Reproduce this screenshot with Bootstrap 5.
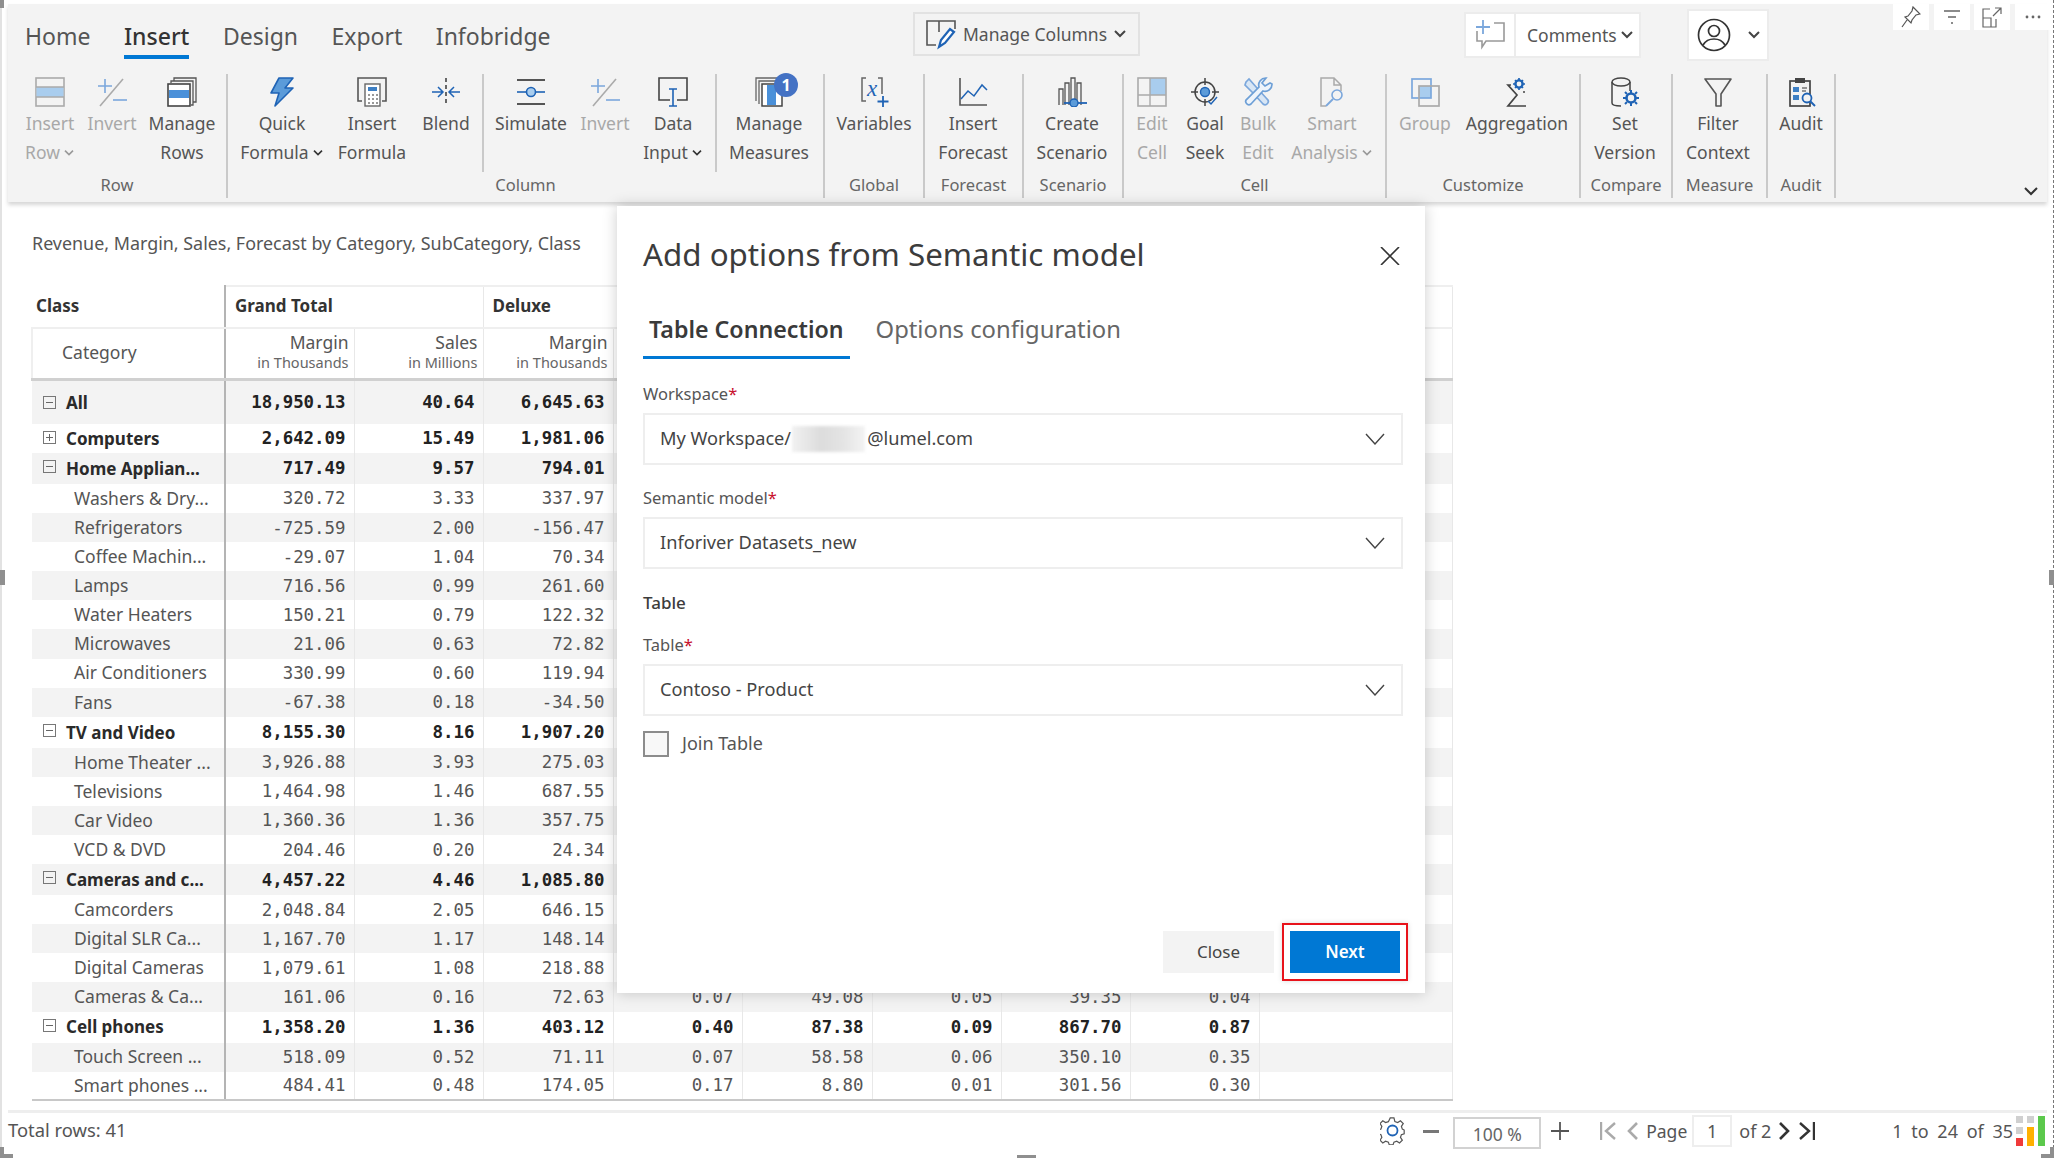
<!DOCTYPE html>
<html lang="en">
<head>
<meta charset="utf-8">
<title>Add options from Semantic model</title>
<link href="https://cdn.jsdelivr.net/npm/bootstrap@5.3.0/dist/css/bootstrap.min.css" rel="stylesheet">
<style>
html,body{height:1158px;overflow:hidden;background:#fff}
body{font-family:"Noto Sans",sans-serif;color:#444;font-size:17px;position:relative}
.shell{height:1158px;border-left:2px solid #e2e2e2;border-right:1px dashed #777}
/* ribbon */
.ribbonbar{margin:4px 6px 0 6px;height:198px;background:#f3f3f3;box-shadow:0 3px 4px rgba(0,0,0,.16);position:relative}
.ribbontop{height:70px}
.tabset{padding-left:17px;gap:33.5px;flex-wrap:nowrap;width:544px;flex:none}
.tabset .nav-link{padding:17px 0 4px;font-size:23px;line-height:30px;color:#555;border-bottom:4px solid transparent}
.tabset .nav-link.active{color:#333;font-weight:500;border-bottom-color:#0078d4}
.mcols{margin:8px 0 0 361px;width:227px;height:44px;border:2px solid #e2e2e2;background:#f3f3f3;color:#555;font-size:17.5px;padding:0 0 0 10px;gap:6px;border-radius:0;flex:none}
.cmts{margin:8px 0 0 324px;width:177px;height:46px;background:#fff;border:2px solid #ececec;flex:none}
.cmts .cicon{width:50px;border-right:2px solid #ececec}
.cmts .ctext{font-size:17.5px;color:#555;padding-left:11px;gap:3px}
.usr{margin:5px 0 0 46px;width:82px;height:52px;background:#fff;border:2px solid #ececec;flex:none}
.rgroup{border-right:2px solid #c9c9c9;height:124px;flex:none}
.rsegs{height:98px}
.rseg{height:98px;flex:none}
.rseg.sepd{border-right:2px solid #c9c9c9}
.glabel{font-size:16.5px;line-height:26px;color:#666;text-align:center;margin-top:0}
.btn.rbtn{padding:3px 0 0;border:0;border-radius:0;font-size:17.5px;line-height:29px;color:#555;background:transparent;flex:none;white-space:nowrap;display:flex;flex-direction:column;align-items:center;position:relative}
.btn.rbtn svg.ic{width:30px;height:30px;margin-bottom:2px;flex:none}
.btn.rbtn.off,.btn.rbtn.off:disabled{color:#a8a8a8;opacity:1}
.rbtn .line2{display:inline-flex;align-items:center;gap:3px}
.rcount{position:absolute;top:-1px;left:53px;width:24px;height:24px;border-radius:50%;background:#4472c4;color:#fff;font-size:16px;font-weight:700;line-height:24px;text-align:center}
.g1{width:220px}.g1 .rsegs{padding-left:12px}
.g2{width:597px}
.g3{width:100px}.g3 .rsegs{padding-left:6px}
.g4{width:99px}.g4 .rsegs{padding-left:6px}
.g5{width:100px}.g5 .rsegs{padding-left:4px}
.g6{width:263px}.g6 .rsegs{padding-left:6px}
.g7{width:194px}.g7 .rsegs{padding-left:6px}
.g8{width:92px}.g8 .rsegs{padding-left:4px}
.g9{width:95px}.g9 .rsegs{padding-left:6px}
.g10{width:68px}.g10 .rsegs{padding-left:5px}
.s2a{width:256px;padding-left:10px}.s2b{width:233px;padding-left:4px}.s2c{width:108px;padding-left:4px}
.bw44{width:44px}.bw56{width:56px}.bw60{width:60px}.bw62{width:62px}.bw64{width:64px}.bw74{width:74px}.bw76{width:76px}.bw78{width:78px}.bw80{width:80px}.bw84{width:84px}.bw86{width:86px}.bw88{width:88px}.bw92{width:92px}.bw96{width:96px}.bw104{width:104px}.bw120{width:120px}
.pinbar{position:absolute;top:0;left:1885px;gap:4.6px}
.pinbar .pcell{width:36px;height:26px;background:#fff;display:flex;align-items:center;justify-content:center}
.ribbonmore{position:absolute;left:2016px;top:182px;line-height:0}
/* content */
.rtitle{padding:29px 0 0 30px;font-size:17.9px;line-height:24px;color:#555;height:83px;margin:0;white-space:nowrap}
.gridwrap{margin-left:29px;width:1422px}
.table.pivot{table-layout:fixed;width:1422px;margin:0;border-collapse:collapse;color:#555;--bs-table-bg:transparent;--bs-table-color:#555}
.colcat{width:193px}.colv{width:129px}.colw{width:130px}
.pivot td,.pivot th{padding:0 8px 0 0;border:0;border-right:1px solid #e8e8e8;text-align:right;font-family:"DejaVu Sans Mono",monospace;font-size:17.4px;font-weight:400;white-space:nowrap;vertical-align:middle;background:transparent;box-shadow:none}
.pivot .cat{font-family:"Noto Sans",sans-serif;text-align:left;border-right:2px solid #b4b4b4;padding:0 0 1px 42px;font-size:17.5px;color:#555;overflow:hidden}
.pivot .sum,.pivot .sum td{font-weight:700;color:#222}
.pivot .sum .cat{padding:0 0 0 34px;position:relative;font-weight:700;color:#2a2a2a;font-size:17px}
.pivot tr.rn{height:29.1px}.pivot tr.rb{height:31px}.pivot tr.rc{height:29px}.pivot tr.ra{height:45px}
.pivot tr.gs td{background:#f3f3f3}
.pivot tr.last{height:28px}
.pivot tr.last td{border-bottom:2px solid #c8c8c8}
.pivot .cap th{height:42px;border-top:2px solid #efefef;border-bottom:2px solid #efefef;font-family:"Noto Sans",sans-serif;font-weight:700;font-size:17px;text-align:left;padding:0 0 2px 9px;color:#333}
.pivot .cap th.cat{border-top-color:transparent;padding-left:4px;font-weight:700;color:#333}
.pivot .sub th{height:51px;border-bottom:3px solid #d0d0d0;font-family:"Noto Sans",sans-serif;line-height:21px;padding:0 5px 2px 0;font-size:17.5px;color:#555}
.pivot .sub th.cat{font-weight:400;padding-left:29px;font-size:17.5px;border-left:2px solid #efefef}
.unitline{display:block;font-size:14.5px;line-height:19px;color:#666}
.tgl{position:absolute;left:11px;top:7px;width:13px;height:13px;border:1px solid #777;display:block}
.ra .tgl{top:15px}
.tgl::before{content:"";position:absolute;left:2px;right:2px;top:5px;height:1px;background:#666}
.tgl.plus::after{content:"";position:absolute;top:2px;bottom:2px;left:5px;width:1px;background:#666}
/* footer */
.pgfoot{margin:9px 6px 0 6px;border-top:3px solid #eee;height:40px;font-size:18px;color:#555;position:relative}
.totals{line-height:36px;font-size:18.4px;margin-bottom:3px}
.fgear{margin-left:auto}
.fminus{width:16px;height:3px;background:#777;margin-left:17px}
.fzoom{width:88px;height:32px;border:2px solid #d2d2d2;margin-left:14px;text-align:center;line-height:30px;font-size:17.5px;color:#666;margin-top:3px}
.fplus{margin-left:10px}
.fnavgrp{margin-left:31px;gap:10px}
.fpage{margin-left:8px;font-size:17.5px}
.fnum{width:40px;height:32px;border:2px solid #eee;margin-left:5px;text-align:center;line-height:28px;color:#555}
.fof{margin-left:7px}
.frange{margin-left:77px;word-spacing:4px;white-space:nowrap}
.fbars{width:30px;height:30px;margin-left:2px;margin-right:2px;flex:none}
/* dialog */
.dlg{position:absolute;left:617px;top:206px;width:808px;height:787px;background:#fff;box-shadow:0 0 14px rgba(0,0,0,.2);z-index:5;padding:0 23px 0 26px;border:0;border-radius:0}
.dlgtitle{font-size:31.3px;font-weight:400;color:#3c3c3c;line-height:40px;margin:28px 0 0;white-space:nowrap}
.dlgclose{position:absolute;left:763px;top:41px;padding:0;border:0;background:none;line-height:0}
.dlgtabs{margin-top:35px;gap:26px;height:49px;flex-wrap:nowrap;border:0}
.dlgtabs .nav-link{padding:0 6px 0 6px;margin:0;border:0;border-radius:0;font-size:23.8px;line-height:40px;height:50px;color:#666;background:none}
.dlgtabs .nav-link.active{font-weight:600;font-size:23.2px;color:#3a3a3a;border-bottom:3px solid #0078d4;background:none}
.dlgtabs .nav-link+.nav-link{padding-left:0}
.dlgbody{padding-top:25px}
.flabel{font-size:16.5px;line-height:22px;color:#555;margin:0 0 8px;display:block}
.flabel i{color:#c8102e;font-style:normal}
.fbox{width:760px;height:52px;border:2px solid #eee;display:flex;align-items:center;padding:0 16px 0 15px;font-size:18.2px;color:#444;margin-bottom:22px;border-radius:0;background:#fff}
.fbox.lastbox{margin-bottom:14px}
.hide-mail{width:73px;height:26px;background:linear-gradient(90deg,#f1f1f1,#dcdcdc 40%,#e4e4e4 70%,#f3f3f3);filter:blur(1.5px);display:inline-block;margin:0 2px 0 1px}
.fbox svg{margin-left:auto;flex:none}
.sect{font-size:17px;font-weight:500;line-height:24px;color:#3c3c3c;margin:0 0 19px}
.form-check.joinrow{padding:0;margin:0;display:flex;align-items:center;gap:13px;min-height:26px}
.form-check.joinrow .form-check-input{width:26px;height:26px;margin:0;float:none;border:2px solid #8c8c8c;border-radius:0;background-color:#f8f8f8}
.form-check.joinrow .form-check-label{font-size:18px;color:#555}
.dlgfoot{position:absolute;right:17px;top:717px;gap:8px;align-items:center}
.btn.bclose{width:111px;height:42px;background:#f3f3f3;border:0;border-radius:0;color:#444;font-size:17px;padding:0}
.redframe{border:2px solid #e8131b;padding:6px;line-height:0;box-shadow:0 0 5px rgba(0,0,0,.15)}
.btn.bnext{width:110px;height:42px;background:#0078d4;border:0;border-radius:0;color:#fff;font-size:17px;font-weight:600;padding:0}
/* handles */
.hnd{position:absolute;background:#8f8f8f;z-index:9}
.h1{left:0;top:0;width:4px;height:8px}
.h2{left:0;top:570px;width:5px;height:15px}
.h3{left:2049px;top:570px;width:5px;height:15px}
.h4{left:1017px;top:1155px;width:19px;height:3px}
.h5{left:0;top:1147px;width:4px;height:11px}
.h6{left:0;top:1154px;width:13px;height:4px}
.h7{left:2050px;top:1147px;width:4px;height:11px}
.h8{left:2041px;top:1154px;width:13px;height:4px}
</style>
</head>
<body>
<div class="shell d-flex flex-column">
  <header class="ribbonbar">
    <div class="ribbontop d-flex align-items-start">
      <nav class="nav tabset">
        <a class="nav-link" href="#">Home</a>
        <a class="nav-link active" href="#">Insert</a>
        <a class="nav-link" href="#">Design</a>
        <a class="nav-link" href="#">Export</a>
        <a class="nav-link" href="#">Infobridge</a>
      </nav>
      <button class="btn mcols d-flex align-items-center">
        <svg width="32" height="32" viewBox="0 0 32 32" fill="none"><path d="M11 27H2V3h28v8M14 3v11" stroke="#555" stroke-width="1.6"/><path d="M14 29l2-7 9-11 4 3-9 11z" fill="#fff" stroke="#1f63b5" stroke-width="2.2"/></svg>
        <span>Manage Columns</span>
        <svg width="14" height="10" viewBox="0 0 14 10" fill="none"><path d="M2 2l5 5 5-5" stroke="#444" stroke-width="2"/></svg>
      </button>
      <div class="cmts d-flex">
        <div class="cicon d-flex align-items-center justify-content-center">
          <svg width="32" height="34" viewBox="0 0 32 34" fill="none"><path d="M20 5h10v18H12l-4 6v-6H3V13" stroke="#999" stroke-width="1.6"/><path d="M9 2v14M2 9h14" stroke="#7ba7dc" stroke-width="1.8"/></svg>
        </div>
        <div class="ctext d-flex align-items-center"><span>Comments</span><svg width="14" height="10" viewBox="0 0 14 10" fill="none"><path d="M2 2l5 5 5-5" stroke="#444" stroke-width="2"/></svg></div>
      </div>
      <div class="usr d-flex align-items-center">
        <svg class="ms-2" width="34" height="36" viewBox="0 0 34 36" fill="none"><circle cx="17" cy="18" r="15.5" stroke="#333" stroke-width="1.7"/><circle cx="17" cy="14" r="5.5" stroke="#333" stroke-width="1.7"/><path d="M6 28c3-5 6-6 11-6s8 1 11 6" stroke="#333" stroke-width="1.7"/></svg>
        <svg class="ms-3" width="14" height="10" viewBox="0 0 14 10" fill="none"><path d="M2 2l5 5 5-5" stroke="#444" stroke-width="2"/></svg>
      </div>
    </div>
    <div class="d-flex">
      <!-- Row -->
      <section class="rgroup g1">
        <div class="rsegs d-flex">
          <button class="btn rbtn off bw60"><svg class="ic" viewBox="0 0 30 30" fill="none"><rect x="1" y="1" width="28" height="28" stroke="#aaa" stroke-width="1.6"/><rect x="1.5" y="10" width="27" height="10" fill="#a9cdee"/><path d="M1 10h28M1 20h28" stroke="#aaa" stroke-width="1.4"/></svg><span>Insert</span><span class="line2">Row <svg width="12" height="8" viewBox="0 0 14 10" fill="none"><path d="M2 2l5 5 5-5" stroke="#999" stroke-width="2"/></svg></span></button>
          <button class="btn rbtn off bw64"><svg class="ic" viewBox="0 0 30 30" fill="none"><path d="M8 2v14M1 9h14" stroke="#7ba7dc" stroke-width="1.6"/><path d="M3 29L26 2" stroke="#aaa" stroke-width="1.6"/><path d="M16 23h14" stroke="#7ba7dc" stroke-width="1.6"/></svg><span>Invert</span></button>
          <button class="btn rbtn bw76"><svg class="ic" viewBox="0 0 30 30" fill="none"><path d="M7 4V1h22v24h-3M4 6V4h22v24h-2" stroke="#555" stroke-width="1.3"/><rect x="1" y="7" width="22" height="22" fill="#fff" stroke="#444" stroke-width="1.6"/><rect x="2" y="13" width="20" height="8" fill="#4a90d9"/></svg><span>Manage</span><span>Rows</span></button>
        </div>
        <div class="glabel">Row</div>
      </section>
      <!-- Column -->
      <section class="rgroup g2">
        <div class="rsegs d-flex">
          <div class="rseg sepd s2a d-flex">
            <button class="btn rbtn bw88"><svg class="ic" viewBox="0 0 30 30"><path d="M12 1h14l-8 10h8L8 29l4-13H4z" fill="#5b9bd9" stroke="#1f63b5" stroke-width="1.6" stroke-linejoin="round"/></svg><span>Quick</span><span class="line2">Formula <svg width="12" height="8" viewBox="0 0 14 10" fill="none"><path d="M2 2l5 5 5-5" stroke="#333" stroke-width="2"/></svg></span></button>
            <button class="btn rbtn bw92"><svg class="ic" viewBox="0 0 30 30" fill="none"><path d="M5 24H1V1h28v23h-4" stroke="#555" stroke-width="1.6"/><rect x="8" y="7" width="15" height="22" fill="#fff" stroke="#666" stroke-width="1.4"/><rect x="11" y="10" width="9" height="4" fill="#3d7fc4"/><path d="M11 18h2M15 18h2M19 18h2M11 22h2M15 22h2M19 22h2M11 26h2M15 26h2M19 26h2" stroke="#777" stroke-width="1.6"/></svg><span>Insert</span><span>Formula</span></button>
            <button class="btn rbtn bw56"><svg class="ic" viewBox="0 0 30 30" fill="none"><path d="M15 1v28" stroke="#444" stroke-width="1.6" stroke-dasharray="4 3"/><path d="M1 15h10M7 10l5 5-5 5M29 15H19M23 10l-5 5 5 5" stroke="#1f63b5" stroke-width="1.5"/></svg><span>Blend</span></button>
          </div>
          <div class="rseg sepd s2b d-flex">
            <button class="btn rbtn bw86"><svg class="ic" viewBox="0 0 30 30" fill="none"><path d="M1 3h28M1 27h28" stroke="#555" stroke-width="1.8"/><path d="M1 15h28" stroke="#1f63b5" stroke-width="1.6"/><circle cx="15" cy="15" r="4.5" fill="#a9cdee" stroke="#1f63b5" stroke-width="1.6"/></svg><span>Simulate</span></button>
            <button class="btn rbtn off bw62"><svg class="ic" viewBox="0 0 30 30" fill="none"><path d="M8 2v14M1 9h14" stroke="#7ba7dc" stroke-width="1.6"/><path d="M3 29L26 2" stroke="#aaa" stroke-width="1.6"/><path d="M16 23h14" stroke="#7ba7dc" stroke-width="1.6"/></svg><span>Invert</span></button>
            <button class="btn rbtn bw74"><svg class="ic" viewBox="0 0 30 30" fill="none"><path d="M12 23H1V1h28v22H19" stroke="#444" stroke-width="1.6"/><path d="M15 12v17M11 12h8M11 29h8" stroke="#1f63b5" stroke-width="1.6"/></svg><span>Data</span><span class="line2">Input <svg width="12" height="8" viewBox="0 0 14 10" fill="none"><path d="M2 2l5 5 5-5" stroke="#333" stroke-width="2"/></svg></span></button>
          </div>
          <div class="rseg s2c d-flex">
            <button class="btn rbtn bw96"><svg class="ic" viewBox="0 0 30 30" fill="none"><path d="M2 24V1h26M5 27V4h22" stroke="#666" stroke-width="1.3"/><rect x="8" y="7" width="20" height="22" fill="#fff" stroke="#444" stroke-width="1.5"/><rect x="13" y="8" width="9" height="20" fill="#4a90d9"/></svg><span class="rcount">1</span><span>Manage</span><span>Measures</span></button>
          </div>
        </div>
        <div class="glabel">Column</div>
      </section>
      <!-- Global -->
      <section class="rgroup g3">
        <div class="rsegs d-flex">
          <button class="btn rbtn bw86"><svg class="ic" viewBox="0 0 30 30" fill="none"><path d="M7 1H3v23h4M19 1h4v16" stroke="#666" stroke-width="1.5"/><text x="13" y="19" text-anchor="middle" font-family="Liberation Serif,serif" font-style="italic" font-size="23" fill="#1f63b5">x</text><path d="M24 19v11M18.500 24.500h11" stroke="#1f63b5" stroke-width="1.8"/></svg><span>Variables</span></button>
        </div>
        <div class="glabel">Global</div>
      </section>
      <!-- Forecast -->
      <section class="rgroup g4">
        <div class="rsegs d-flex">
          <button class="btn rbtn bw84"><svg class="ic" viewBox="0 0 30 30" fill="none"><path d="M2 1v27h27" stroke="#555" stroke-width="1.6"/><path d="M3 22l7-8 6 5 8-11 5 5" stroke="#1f63b5" stroke-width="1.5"/></svg><span>Insert</span><span>Forecast</span></button>
        </div>
        <div class="glabel">Forecast</div>
      </section>
      <!-- Scenario -->
      <section class="rgroup g5">
        <div class="rsegs d-flex">
          <button class="btn rbtn bw88"><svg class="ic" viewBox="0 0 30 30" fill="none"><path d="M2 28V12h4v16M8 28V6h4v22M14 28V1h4v27M20 28V6h4v22" stroke="#555" stroke-width="1.3"/><path d="M7 26h23" stroke="#1f63b5" stroke-width="1.8"/><circle cx="17" cy="26" r="4" fill="#5b9bd9" stroke="#1f63b5" stroke-width="1.4"/></svg><span>Create</span><span>Scenario</span></button>
        </div>
        <div class="glabel">Scenario</div>
      </section>
      <!-- Cell -->
      <section class="rgroup g6">
        <div class="rsegs d-flex">
          <button class="btn rbtn off bw44"><svg class="ic" viewBox="0 0 30 30" fill="none"><rect x="13" y="1" width="16" height="17" fill="#a9cdee"/><rect x="1" y="1" width="28" height="28" stroke="#aaa" stroke-width="1.6"/><path d="M13 1v28M1 18h28" stroke="#aaa" stroke-width="1.4"/></svg><span>Edit</span><span>Cell</span></button>
          <button class="btn rbtn bw62"><svg class="ic" viewBox="0 0 30 30" fill="none"><circle cx="15" cy="15" r="10" stroke="#444" stroke-width="1.5"/><path d="M15 1v7M15 22v7M1 15h7M22 15h7" stroke="#444" stroke-width="1.5"/><circle cx="15" cy="15" r="4.5" fill="#5b9bd9" stroke="#1f63b5" stroke-width="1.4"/><path d="M18 24l3 3 6-7" stroke="#1f63b5" stroke-width="1.5"/></svg><span>Goal</span><span>Seek</span></button>
          <button class="btn rbtn off bw44"><svg class="ic" viewBox="0 0 30 30" fill="none"><path d="M3 5l3-3 8 9 10 11a3 3 0 01-4 5L10 16 2 8z" fill="#d8e6f5" stroke="#7ba7dc" stroke-width="1.7"/><path d="M27 6l-5 3-3-3 4-5a7 7 0 00-7 9L4 22a3 3 0 004 5L20 14a7 7 0 009-7z" fill="#eef4fb" stroke="#6d9fd6" stroke-width="1.7"/></svg><span>Bulk</span><span>Edit</span></button>
          <button class="btn rbtn off bw104"><svg class="ic" viewBox="0 0 30 30" fill="none"><path d="M9 29H4V1h13l7 7v6M17 1v7h7" stroke="#aaa" stroke-width="1.5"/><circle cx="20" cy="18" r="5" stroke="#7ba7dc" stroke-width="1.6"/><path d="M16 22l-7 7" stroke="#7ba7dc" stroke-width="1.8"/></svg><span>Smart</span><span class="line2">Analysis <svg width="12" height="8" viewBox="0 0 14 10" fill="none"><path d="M2 2l5 5 5-5" stroke="#999" stroke-width="2"/></svg></span></button>
        </div>
        <div class="glabel">Cell</div>
      </section>
      <!-- Customize -->
      <section class="rgroup g7">
        <div class="rsegs d-flex">
          <button class="btn rbtn off bw64"><svg class="ic" viewBox="0 0 30 30" fill="none"><rect x="9" y="9" width="12" height="12" fill="#a9cdee"/><rect x="2" y="2" width="19" height="19" stroke="#7ba7dc" stroke-width="1.7"/><rect x="9" y="9" width="20" height="20" stroke="#aaa" stroke-width="1.7"/></svg><span>Group</span></button>
          <button class="btn rbtn bw120"><svg class="ic" viewBox="0 0 30 30" fill="none"><path d="M24 29H6l9-11-9-10h3" stroke="#444" stroke-width="1.7"/><path d="M21 15l2 0" stroke="#444" stroke-width="1.5"/><circle cx="17" cy="7" r="3.6" stroke="#1f63b5" stroke-width="2.4"/><path d="M17 1v2M17 11v2M11 7h2M21 7h2M13 3l1 1M20 10l1 1M21 3l-1 1M14 10l-1 1" stroke="#1f63b5" stroke-width="1.7"/></svg><span>Aggregation</span></button>
        </div>
        <div class="glabel">Customize</div>
      </section>
      <!-- Compare -->
      <section class="rgroup g8">
        <div class="rsegs d-flex">
          <button class="btn rbtn bw80"><svg class="ic" viewBox="0 0 30 30" fill="none"><ellipse cx="11" cy="5" rx="9" ry="4" stroke="#444" stroke-width="1.5"/><path d="M2 5v21c0 2 4 3 9 3M20 5v9" stroke="#444" stroke-width="1.5"/><circle cx="21" cy="21" r="4.5" stroke="#1f63b5" stroke-width="2.6"/><path d="M21 13v3M21 26v3M13 21h3M26 21h3M15 15l2 2M25 25l2 2M27 15l-2 2M17 25l-2 2" stroke="#1f63b5" stroke-width="2"/></svg><span>Set</span><span>Version</span></button>
        </div>
        <div class="glabel">Compare</div>
      </section>
      <!-- Measure -->
      <section class="rgroup g9">
        <div class="rsegs d-flex">
          <button class="btn rbtn bw78"><svg class="ic" viewBox="0 0 30 30" fill="none"><path d="M2 2h26L18 17v12h-5V17z" stroke="#555" stroke-width="1.6" stroke-linejoin="round"/></svg><span>Filter</span><span>Context</span></button>
        </div>
        <div class="glabel">Measure</div>
      </section>
      <!-- Audit -->
      <section class="rgroup g10">
        <div class="rsegs d-flex">
          <button class="btn rbtn bw56"><svg class="ic" viewBox="0 0 30 30" fill="none"><rect x="4" y="4" width="20" height="25" fill="#f3f3f3" stroke="#444" stroke-width="1.7"/><rect x="9" y="1" width="10" height="5" fill="#444"/><path d="M7 10h6v5H7zM7 18h6v5H7z" fill="#3d7fc4"/><path d="M16 11h5M16 14h4" stroke="#777" stroke-width="1.4"/><circle cx="21" cy="21" r="4.5" fill="#f3f3f3" stroke="#1f63b5" stroke-width="1.8"/><path d="M24 24l5 5" stroke="#1f63b5" stroke-width="2"/></svg><span>Audit</span></button>
        </div>
        <div class="glabel">Audit</div>
      </section>
    </div>
    <div class="pinbar d-flex">
      <div class="pcell"><svg width="20" height="22" viewBox="0 0 20 22" fill="none"><path d="M12 1l7 7-4 1-4 5-1 3-6-6 3-1 4-5zM6 14l-5 7" stroke="#555" stroke-width="1.2"/></svg></div>
      <div class="pcell"><svg width="18" height="16" viewBox="0 0 18 16" fill="none"><path d="M1 2h16M5 8h8M8 14h2" stroke="#666" stroke-width="1.3"/></svg></div>
      <div class="pcell"><svg width="20" height="22" viewBox="0 0 20 22" fill="none"><path d="M8 3H1v18h13v-8M1 12h8v9M11 10l8-8M13 2h6v6" stroke="#666" stroke-width="1.2"/></svg></div>
      <div class="pcell"><svg width="16" height="4" viewBox="0 0 16 4"><circle cx="2" cy="2" r="1.4" fill="#666"/><circle cx="8" cy="2" r="1.4" fill="#666"/><circle cx="14" cy="2" r="1.4" fill="#666"/></svg></div>
    </div>
    <div class="ribbonmore"><svg width="14" height="10" viewBox="0 0 14 10" fill="none"><path d="M1 2l6 6 6-6" stroke="#333" stroke-width="2"/></svg></div>
  </header>

  <main>
    <p class="rtitle">Revenue, Margin, Sales, Forecast by Category, SubCategory, Class</p>
    <div class="gridwrap">
      <table class="table pivot">
        <colgroup><col class="colcat"><col class="colv"><col class="colv"><col class="colw"><col class="colv"><col class="colw"><col class="colv"><col class="colv"><col class="colv"><col></colgroup>
        <thead>
          <tr class="cap"><th class="cat">Class</th><th colspan="2">Grand Total</th><th colspan="2">Deluxe</th><th colspan="2"></th><th colspan="2"></th><th></th></tr>
          <tr class="sub"><th class="cat">Category</th><th>Margin<span class="unitline">in Thousands</span></th><th>Sales<span class="unitline">in Millions</span></th><th>Margin<span class="unitline">in Thousands</span></th><th></th><th></th><th></th><th></th><th></th><th></th></tr>
        </thead>
        <tbody>
          <tr class="ra gs sum"><td class="cat"><span class="tgl"></span>All</td><td>18,950.13</td><td>40.64</td><td>6,645.63</td><td></td><td></td><td></td><td></td><td></td><td></td></tr>
          <tr class="rc sum"><td class="cat"><span class="tgl plus"></span>Computers</td><td>2,642.09</td><td>15.49</td><td>1,981.06</td><td></td><td></td><td></td><td></td><td></td><td></td></tr>
          <tr class="rb gs sum"><td class="cat"><span class="tgl"></span>Home Applian...</td><td>717.49</td><td>9.57</td><td>794.01</td><td></td><td></td><td></td><td></td><td></td><td></td></tr>
          <tr class="rn"><td class="cat">Washers &amp; Dry...</td><td>320.72</td><td>3.33</td><td>337.97</td><td></td><td></td><td></td><td></td><td></td><td></td></tr>
          <tr class="rn gs"><td class="cat">Refrigerators</td><td>-725.59</td><td>2.00</td><td>-156.47</td><td></td><td></td><td></td><td></td><td></td><td></td></tr>
          <tr class="rn"><td class="cat">Coffee Machin...</td><td>-29.07</td><td>1.04</td><td>70.34</td><td></td><td></td><td></td><td></td><td></td><td></td></tr>
          <tr class="rn gs"><td class="cat">Lamps</td><td>716.56</td><td>0.99</td><td>261.60</td><td></td><td></td><td></td><td></td><td></td><td></td></tr>
          <tr class="rn"><td class="cat">Water Heaters</td><td>150.21</td><td>0.79</td><td>122.32</td><td></td><td></td><td></td><td></td><td></td><td></td></tr>
          <tr class="rn gs"><td class="cat">Microwaves</td><td>21.06</td><td>0.63</td><td>72.82</td><td></td><td></td><td></td><td></td><td></td><td></td></tr>
          <tr class="rn"><td class="cat">Air Conditioners</td><td>330.99</td><td>0.60</td><td>119.94</td><td></td><td></td><td></td><td></td><td></td><td></td></tr>
          <tr class="rn gs"><td class="cat">Fans</td><td>-67.38</td><td>0.18</td><td>-34.50</td><td></td><td></td><td></td><td></td><td></td><td></td></tr>
          <tr class="rb sum"><td class="cat"><span class="tgl"></span>TV and Video</td><td>8,155.30</td><td>8.16</td><td>1,907.20</td><td></td><td></td><td></td><td></td><td></td><td></td></tr>
          <tr class="rn gs"><td class="cat">Home Theater ...</td><td>3,926.88</td><td>3.93</td><td>275.03</td><td></td><td></td><td></td><td></td><td></td><td></td></tr>
          <tr class="rn"><td class="cat">Televisions</td><td>1,464.98</td><td>1.46</td><td>687.55</td><td></td><td></td><td></td><td></td><td></td><td></td></tr>
          <tr class="rn gs"><td class="cat">Car Video</td><td>1,360.36</td><td>1.36</td><td>357.75</td><td></td><td></td><td></td><td></td><td></td><td></td></tr>
          <tr class="rn"><td class="cat">VCD &amp; DVD</td><td>204.46</td><td>0.20</td><td>24.34</td><td></td><td></td><td></td><td></td><td></td><td></td></tr>
          <tr class="rb gs sum"><td class="cat"><span class="tgl"></span>Cameras and c...</td><td>4,457.22</td><td>4.46</td><td>1,085.80</td><td></td><td></td><td></td><td></td><td></td><td></td></tr>
          <tr class="rn"><td class="cat">Camcorders</td><td>2,048.84</td><td>2.05</td><td>646.15</td><td></td><td></td><td></td><td></td><td></td><td></td></tr>
          <tr class="rn gs"><td class="cat">Digital SLR Ca...</td><td>1,167.70</td><td>1.17</td><td>148.14</td><td></td><td></td><td></td><td></td><td></td><td></td></tr>
          <tr class="rn"><td class="cat">Digital Cameras</td><td>1,079.61</td><td>1.08</td><td>218.88</td><td></td><td></td><td></td><td></td><td></td><td></td></tr>
          <tr class="rn gs"><td class="cat">Cameras &amp; Ca...</td><td>161.06</td><td>0.16</td><td>72.63</td><td>0.07</td><td>49.08</td><td>0.05</td><td>39.35</td><td>0.04</td><td></td></tr>
          <tr class="rb sum"><td class="cat"><span class="tgl"></span>Cell phones</td><td>1,358.20</td><td>1.36</td><td>403.12</td><td>0.40</td><td>87.38</td><td>0.09</td><td>867.70</td><td>0.87</td><td></td></tr>
          <tr class="rn gs"><td class="cat">Touch Screen ...</td><td>518.09</td><td>0.52</td><td>71.11</td><td>0.07</td><td>58.58</td><td>0.06</td><td>350.10</td><td>0.35</td><td></td></tr>
          <tr class="last"><td class="cat">Smart phones ...</td><td>484.41</td><td>0.48</td><td>174.05</td><td>0.17</td><td>8.80</td><td>0.01</td><td>301.56</td><td>0.30</td><td></td></tr>
        </tbody>
      </table>
    </div>
  </main>

  <footer class="pgfoot d-flex align-items-center">
    <span class="totals">Total rows: 41</span>
    <svg class="fgear" width="26" height="28" viewBox="0 0 26 28" fill="none"><path d="M11 1h4l1 4 3 1 3-2 3 3-2 3 1 3 2 1v4l-3 1-1 3 2 3-3 3-3-2-3 1-1 3h-4l-1-3-3-1-3 2-3-3 2-3-1-3-3-1v-4l3-1 1-3-2-3 3-3 3 2 3-1z" stroke="#555" stroke-width="1.3" transform="scale(.93)"/><circle cx="12.5" cy="13.5" r="5" stroke="#1f63b5" stroke-width="1.8"/></svg>
    <span class="fminus"></span>
    <span class="fzoom">100 %</span>
    <svg class="fplus" width="18" height="18" viewBox="0 0 18 18" fill="none"><path d="M9 0v18M0 9h18" stroke="#555" stroke-width="1.8"/></svg>
    <div class="fnavgrp d-flex align-items-center">
      <svg width="17" height="20" viewBox="0 0 17 20" fill="none"><path d="M1 1v18M15 2L6 10l9 8" stroke="#aaa" stroke-width="2.4"/></svg>
      <svg width="11" height="20" viewBox="0 0 11 20" fill="none"><path d="M10 2L2 10l8 8" stroke="#aaa" stroke-width="2.6"/></svg>
    </div>
    <span class="fpage">Page</span>
    <span class="fnum">1</span>
    <span class="fof">of 2</span>
    <div class="d-flex align-items-center gap-2 ms-2">
      <svg width="11" height="20" viewBox="0 0 11 20" fill="none"><path d="M1 2l8 8-8 8" stroke="#333" stroke-width="2.6"/></svg>
      <svg width="17" height="20" viewBox="0 0 17 20" fill="none"><path d="M16 1v18M2 2l9 8-9 8" stroke="#333" stroke-width="2.4"/></svg>
    </div>
    <span class="frange">1 to 24 of 35</span>
    <svg class="fbars" viewBox="0 0 30 30"><rect x="1" y="0" width="7" height="7" fill="#d0d0d0"/><rect x="1" y="11" width="7" height="7" fill="#d0d0d0"/><rect x="1" y="22" width="7" height="8" fill="#f03a3a"/><rect x="12" y="0" width="7" height="7" fill="#d0d0d0"/><rect x="12" y="11" width="7" height="19" fill="#ffb000"/><rect x="23" y="0" width="7" height="30" fill="#5cc94c"/></svg>
  </footer>
</div>

<div class="dlg modal-content" role="dialog" aria-label="Add options from Semantic model">
  <h2 class="dlgtitle">Add options from Semantic model</h2>
  <button class="dlgclose" aria-label="Close"><svg width="20" height="18" viewBox="0 0 20 18" fill="none"><path d="M1 0l18 18M19 0L1 18" stroke="#333" stroke-width="1.6"/></svg></button>
  <nav class="nav nav-tabs dlgtabs">
    <a class="nav-link active" href="#">Table Connection</a>
    <a class="nav-link" href="#">Options configuration</a>
  </nav>
  <div class="dlgbody">
    <label class="flabel">Workspace<i>*</i></label>
    <div class="fbox">My Workspace/<span class="hide-mail"></span>@lumel.com<svg width="20" height="12" viewBox="0 0 20 12" fill="none"><path d="M1 1l9 10 9-10" stroke="#444" stroke-width="1.4"/></svg></div>
    <label class="flabel">Semantic model<i>*</i></label>
    <div class="fbox">Inforiver Datasets_new<svg width="20" height="12" viewBox="0 0 20 12" fill="none"><path d="M1 1l9 10 9-10" stroke="#444" stroke-width="1.4"/></svg></div>
    <h3 class="sect">Table</h3>
    <label class="flabel">Table<i>*</i></label>
    <div class="fbox lastbox">Contoso - Product<svg width="20" height="12" viewBox="0 0 20 12" fill="none"><path d="M1 1l9 10 9-10" stroke="#444" stroke-width="1.4"/></svg></div>
    <div class="form-check joinrow"><input class="form-check-input" type="checkbox" id="jt"><label class="form-check-label" for="jt">Join Table</label></div>
  </div>
  <div class="dlgfoot d-flex">
    <button class="btn bclose">Close</button>
    <div class="redframe"><button class="btn bnext">Next</button></div>
  </div>
</div>

<i class="hnd h1"></i><i class="hnd h2"></i><i class="hnd h3"></i><i class="hnd h4"></i><i class="hnd h5"></i><i class="hnd h6"></i><i class="hnd h7"></i><i class="hnd h8"></i>
<script src="https://cdn.jsdelivr.net/npm/bootstrap@5.3.0/dist/js/bootstrap.bundle.min.js"></script>
</body>
</html>
